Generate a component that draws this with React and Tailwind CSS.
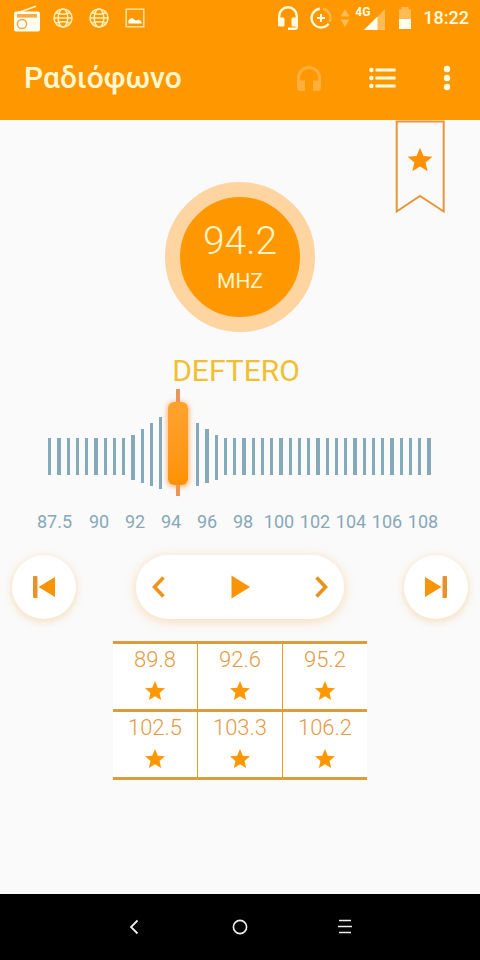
import React, { useState } from "react";

const SCALE = ["90", "92", "94", "96", "98", "100", "102", "104", "106", "108"];
const PRESETS = ["89.8", "92.6", "95.2", "102.5", "103.3", "106.2"];

// Ticks around the needle grow taller: [top, bottom] by tick index.
// The three ticks under the needle are left out.
const TALL = {
  9: [18, 63],
  10: [12, 66],
  11: [6, 69],
  12: [0, 72],
  16: [6, 69],
  17: [12, 66],
  18: [18, 63],
};

const TICKS = [];
for (let i = 0, x = 0; i < 42; i++) {
  const width = i % 4 === 1 ? 4 : 3;
  const [top, bottom] = TALL[i] || [21, 58];
  if (i < 13 || i > 15) TICKS.push({ x, width, top, height: bottom - top });
  x += width + 6;
}

function Star({ className }) {
  return (
    <svg viewBox="2 2 20 19" className={className} fill="currentColor" aria-hidden="true">
      <path d="M12 17.27 18.18 21l-1.64-7.03L22 9.24l-7.19-.61L12 2 9.19 8.63 2 9.24l5.46 4.73L5.82 21z" />
    </svg>
  );
}

function Globe() {
  return (
    <svg viewBox="0 0 20 20" className="mr-4 size-5" fill="none" stroke="#ffeeb8" strokeWidth="1.5" aria-hidden="true">
      <circle cx="10" cy="10" r="9" />
      <ellipse cx="10" cy="10" rx="4.8" ry="9" />
      <path d="M3 4.8Q10 7.6 17 4.8M3 15.2Q10 12.4 17 15.2M1 10h18" />
    </svg>
  );
}

function StatusBar() {
  return (
    <div className="flex h-9 items-center justify-between pl-3.5 pr-[11px] text-white">
      <div className="flex items-center">
        <svg viewBox="0 0 27 27" className="mr-3 size-[27px]" aria-hidden="true">
          <path d="M3 8 22 1.2" stroke="#fff3cf" strokeWidth="1.6" />
          <rect x="0" y="6.5" width="26" height="20" rx="2" fill="#fffdf0" />
          <rect x="3" y="9" width="20" height="3.6" fill="#f5ac4c" />
          <circle cx="8" cy="19" r="4.6" fill="none" stroke="#f0a848" strokeWidth="1.5" />
        </svg>
        <Globe />
        <Globe />
        <svg viewBox="0 0 20 20" className="size-5" aria-hidden="true">
          <rect x="1.2" y="1.2" width="17.6" height="17.6" fill="none" stroke="#ffe2a0" strokeWidth="1.5" />
          <path d="M3.5 15.5v-3.2l2-1.8 1.8-.6 2.4 2 2.3.6 1.6-1 2.4 1.5.8 2.5z" fill="#fff" />
        </svg>
      </div>
      <div className="flex items-center">
        <svg viewBox="0 0 22 26" className="mr-[11px] h-[26px] w-[22px]" aria-hidden="true">
          <path d="M2.2 15v-4a8.8 8.8 0 0 1 17.6 0v11q0 1.8-1.8 1.8h-7" fill="none" stroke="#fffbe0" strokeWidth="2.4" />
          <rect x="1" y="12.5" width="6.5" height="9" rx="1.5" fill="#fffbe0" />
          <rect x="14.5" y="12.5" width="6.5" height="9" rx="1.5" fill="#fffbe0" />
        </svg>
        <svg viewBox="0 0 22 22" className="mr-2 size-[22px]" fill="none" strokeWidth="2.4" aria-hidden="true">
          <path d="M12.8 1.7A9.4 9.4 0 0 1 19.6 14.8" stroke="#ffb547" />
          <path d="M10 1.7A9.4 9.4 0 1 0 18.6 16.6" stroke="#fffbe0" />
          <path d="M11 7v8M7 11h8" stroke="#fffbe0" strokeWidth="2" />
        </svg>
        <svg viewBox="0 0 10 18" className="mr-[5px] h-[18px] w-2.5" fill="#ffbb55" aria-hidden="true">
          <path d="M5 0l4.5 7.5h-9zM5 18l4.5-7.5h-9z" />
        </svg>
        <span className="relative mr-3.5 flex h-6 w-[30px] items-end justify-end">
          <svg viewBox="0 0 21 21" className="size-[21px]" aria-hidden="true">
            <path d="M0 21 21 0v21z" fill="#ffbb55" />
            <path d="M0 21 13.5 7.5V21z" fill="#fffdf0" />
          </svg>
          <span className="absolute -top-0.5 left-0 text-xs font-bold leading-4 text-[#fffbe0]">4G</span>
        </span>
        <svg viewBox="0 0 12 22" className="mr-3 h-[22px] w-3" aria-hidden="true">
          <path d="M2.5 0h7v2.2H12V22H0V2.2h2.5z" fill="#ffbb55" />
          <path d="M0 12h12v10H0z" fill="#fffdf0" />
        </svg>
        <span className="text-lg font-medium leading-6 text-[#fffbe0]">18:22</span>
      </div>
    </div>
  );
}

function AppBar() {
  return (
    <header className="flex h-[84px] items-center justify-between pl-6 pr-[21px]">
      <h1 className="text-3xl font-medium text-[#fff8d0]">Ραδιόφωνο</h1>
      <div className="flex items-center">
        <button type="button" aria-label="Ακουστικά" className="mr-12 text-[#ffb03c]">
          <svg viewBox="0 0 24 25" className="h-[25px] w-6" fill="currentColor" aria-hidden="true">
            <path d="M12 0A12 12 0 0 0 0 12v9.5A3.5 3.5 0 0 0 3.5 25H8V14.5H2.8V12a9.2 9.2 0 0 1 18.4 0v2.5H16V25h4.5a3.5 3.5 0 0 0 3.5-3.5V12A12 12 0 0 0 12 0z" />
          </svg>
        </button>
        <button type="button" aria-label="Λίστα σταθμών" className="mr-[39px] text-[#fffbe0]">
          <svg viewBox="0 0 27 22" className="h-[22px] w-[27px]" fill="currentColor" aria-hidden="true">
            <circle cx="2.4" cy="3" r="2.2" />
            <circle cx="2.4" cy="11" r="2.2" />
            <circle cx="2.4" cy="19" r="2.2" />
            <path d="M6.5 1.5h20v3h-20zM6.5 9.5h20v3h-20zM6.5 17.5h20v3h-20z" />
          </svg>
        </button>
        <button type="button" aria-label="Μενού" className="px-2 text-[#fffbe0]">
          <svg viewBox="0 0 8 26" className="h-[26px] w-2" fill="currentColor" aria-hidden="true">
            <circle cx="4" cy="4" r="3.2" />
            <circle cx="4" cy="13" r="3.2" />
            <circle cx="4" cy="22" r="3.2" />
          </svg>
        </button>
      </div>
    </header>
  );
}

function Tuner() {
  const [value, setValue] = useState(94.2);
  return (
    <div className="flex flex-col items-center">
      <div className="relative flex h-[107px] w-96 items-end pb-[7px]">
        <svg viewBox="0 0 384 72" className="h-[72px] w-full" fill="#84a9b8" shapeRendering="crispEdges" aria-hidden="true">
          {TICKS.map((t) => (
            <rect key={t.x} x={t.x} y={t.top} width={t.width} height={t.height} />
          ))}
        </svg>
        <div className="absolute left-32 top-0 h-full w-1 bg-[#e8975a]" />
        <div className="absolute left-[120px] top-[13px] h-[83px] w-5 rounded-md bg-gradient-to-b from-[#ffa32e] to-[#ff9100] shadow-[0_1px_5px_1px_rgba(255,150,60,0.7)]" />
        <input
          type="range"
          aria-label="Συχνότητα"
          min="87.5"
          max="108"
          step="0.1"
          value={value}
          onChange={(e) => setValue(Number(e.target.value))}
          className="absolute inset-0 h-full w-full opacity-0"
        />
      </div>
      <div className="mt-3.5 flex w-[424px] text-center text-lg leading-6 text-[#86a8b7]">
        <span className="w-[53px]">87.5</span>
        {SCALE.map((s) => (
          <span key={s} className="w-9">{s}</span>
        ))}
      </div>
    </div>
  );
}

function RoundButton({ label, children }) {
  return (
    <button
      type="button"
      aria-label={label}
      className="flex size-16 items-center justify-center rounded-full bg-white text-[#f89406] shadow-[0_2px_8px_rgba(245,170,70,0.4)]"
    >
      {children}
    </button>
  );
}

function Controls() {
  return (
    <div className="flex w-full items-center justify-between px-3">
      <RoundButton label="Προηγούμενος σταθμός">
        <svg viewBox="0 0 22 22" className="size-[22px]" fill="currentColor" aria-hidden="true">
          <rect x="0" y="0" width="4.5" height="22" rx="1" fill="#e8922a" />
          <path d="M22 1v20L5.5 11z" />
        </svg>
      </RoundButton>
      <div className="flex h-16 w-[208px] items-center justify-between rounded-full bg-white px-4 text-[#f89406] shadow-[0_2px_12px_rgba(245,170,70,0.4)]">
        <button type="button" aria-label="Πίσω">
          <svg viewBox="0 0 13 22" className="h-[22px] w-[13px]" fill="none" stroke="#ee941c" strokeWidth="3.6" aria-hidden="true">
            <path d="M11.5 1.5 2.5 11l9 9.5" />
          </svg>
        </button>
        <button type="button" aria-label="Αναπαραγωγή">
          <svg viewBox="0 0 19 24" className="h-6 w-[19px]" fill="currentColor" aria-hidden="true">
            <path d="M.5.5 19 12 .5 23.5z" />
          </svg>
        </button>
        <button type="button" aria-label="Εμπρός">
          <svg viewBox="0 0 13 22" className="h-[22px] w-[13px]" fill="none" stroke="#e8931c" strokeWidth="3.6" aria-hidden="true">
            <path d="M1.5 1.5 10.5 11l-9 9.5" />
          </svg>
        </button>
      </div>
      <RoundButton label="Επόμενος σταθμός">
        <svg viewBox="0 0 22 22" className="size-[22px]" fill="currentColor" aria-hidden="true">
          <rect x="17.5" y="0" width="4.5" height="22" rx="1" fill="#e8922a" />
          <path d="M0 1v20L16.5 11z" />
        </svg>
      </RoundButton>
    </div>
  );
}

function Presets() {
  return (
    <div className="grid grid-cols-[85px_85px_84px] border-t-3 border-[#dd9c3c] bg-white">
      {PRESETS.map((p, i) => (
        <button
          key={p}
          type="button"
          className={
            "flex h-[68px] flex-col items-center border-b-3 border-b-[#dd9c3c] pt-0.5 text-[#e59a45] " +
            (i % 3 < 2 ? "border-r border-r-[#e8a01c]" : "")
          }
        >
          <span className="text-[22px] font-light leading-7">{p}</span>
          <Star className="mt-[7px] h-[19px] w-5 text-[#ff9800]" />
        </button>
      ))}
    </div>
  );
}

function NavBar() {
  return (
    <nav className="flex h-[66px] items-center justify-center gap-[89px] bg-black text-[#eee]">
      <button type="button" aria-label="Πίσω">
        <svg viewBox="0 0 16 16" className="size-4" fill="none" stroke="currentColor" strokeWidth="1.8" aria-hidden="true">
          <path d="M10.5 1.5 4 8l6.500 6.500" />
        </svg>
      </button>
      <button type="button" aria-label="Αρχική">
        <svg viewBox="0 0 16 16" className="size-4" fill="none" stroke="currentColor" strokeWidth="1.6" aria-hidden="true">
          <circle cx="8" cy="8" r="6.6" />
        </svg>
      </button>
      <button type="button" aria-label="Πρόσφατα">
        <svg viewBox="0 0 16 16" className="size-4" fill="none" stroke="currentColor" strokeWidth="1.7" aria-hidden="true">
          <path d="M2 1.5h12M1 7.5h14M2 13.5h12" />
        </svg>
      </button>
    </nav>
  );
}

export default function App() {
  return (
    <div className="flex min-h-screen flex-col bg-[#fafafa] font-[Roboto,'Noto_Sans',sans-serif]">
      <div className="bg-[#ff9800]">
        <StatusBar />
        <AppBar />
      </div>
      <main className="relative flex flex-1 flex-col items-center pt-[62px]">
        <button type="button" aria-label="Αγαπημένο" className="absolute right-[35px] top-0 text-[#ff9106]">
          <svg viewBox="0 0 50 94" className="h-[94px] w-[50px]" aria-hidden="true">
            <path d="M1.7 1.5h47v90L25 76 1.7 91.5z" fill="none" stroke="#e8963a" strokeWidth="2" />
            <path
              transform="translate(10.1 25.2) scale(1.24)"
              d="M12 17.27 18.18 21l-1.64-7.03L22 9.24l-7.19-.61L12 2 9.19 8.63 2 9.24l5.46 4.73L5.82 21z"
              fill="currentColor"
            />
          </svg>
        </button>
        <div className="flex size-[150px] flex-col items-center justify-center rounded-full border-15 border-[#fed4a1] bg-[#ff9800] text-[#fff3c8]">
          <span className="text-[39px] font-light leading-12">94.2</span>
          <span className="text-[21px] leading-8">MHZ</span>
        </div>
        <h2 className="mt-[21px] pr-2 text-3xl leading-9 text-[#f0c030]">DEFTERO</h2>
        <Tuner />
        <div className="mt-[21px] w-full">
          <Controls />
        </div>
        <div className="mt-[22px]">
          <Presets />
        </div>
      </main>
      <NavBar />
    </div>
  );
}
